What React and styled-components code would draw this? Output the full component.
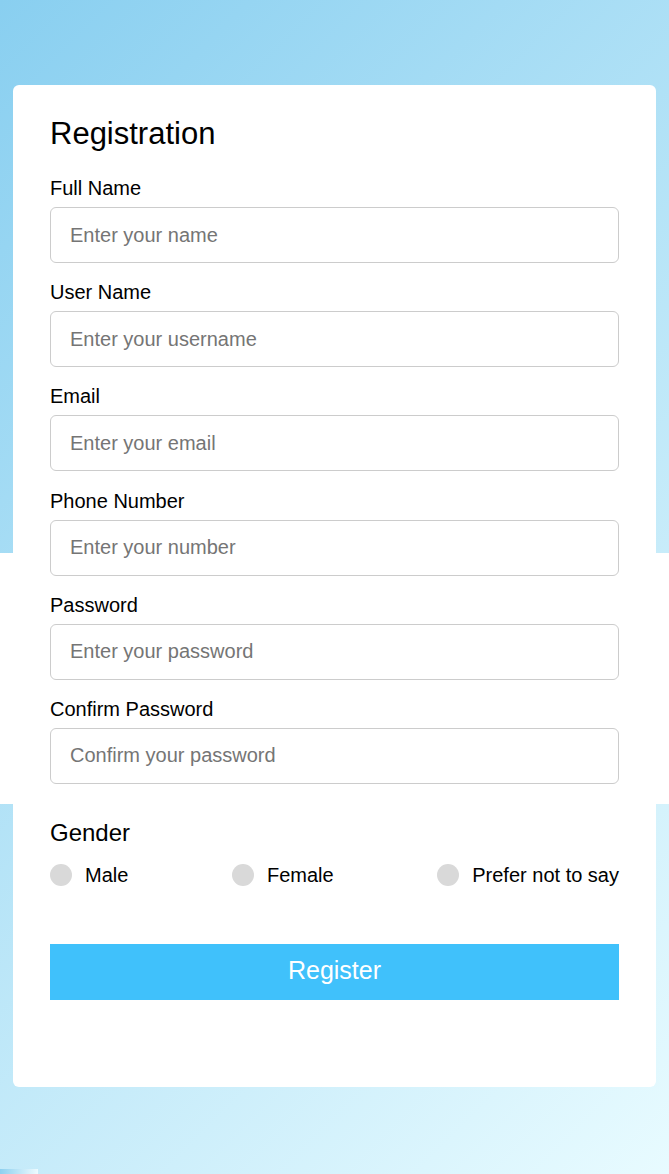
import styled, { createGlobalStyle } from "styled-components";

const fields = [
  { label: "Full Name", placeholder: "Enter your name", type: "text" },
  { label: "User Name", placeholder: "Enter your username", type: "text" },
  { label: "Email", placeholder: "Enter your email", type: "email" },
  { label: "Phone Number", placeholder: "Enter your number", type: "tel" },
  { label: "Password", placeholder: "Enter your password", type: "password" },
  { label: "Confirm Password", placeholder: "Confirm your password", type: "password" },
];

const genders = ["Male", "Female", "Prefer not to say"];

const App = () => {
  return (
    <Page>
      <GlobalStyle />
      <Card>
        <Title>Registration</Title>
        <Fields>
          {fields.map((f) => (
            <Field key={f.label}>
              <Label>{f.label}</Label>
              <Input type={f.type} placeholder={f.placeholder} />
            </Field>
          ))}
        </Fields>
        <GenderTitle>Gender</GenderTitle>
        <GenderRow>
          {genders.map((g) => (
            <Option key={g}>
              <Radio type="radio" name="gender" />
              <span>{g}</span>
            </Option>
          ))}
        </GenderRow>
        <Button type="button">Register</Button>
      </Card>
    </Page>
  );
};

export default App;

const GlobalStyle = createGlobalStyle`
  * {
    box-sizing: border-box;
  }
  body {
    margin: 0;
    font-family: "Liberation Sans", Arial, sans-serif;
  }
`;

// the white band and the little strip at the bottom are part of the page background
const Page = styled.div`
  min-height: 1174px;
  padding: 85px 13px 87px;
  background:
    linear-gradient(to right, #8dd0ef, #eefbff) 0 1169px / 38px 5px no-repeat,
    linear-gradient(#fff, #fff) 0 553px / 100% 251px no-repeat,
    linear-gradient(135deg, #89cff0, #e8fbff) 0 0 / 100% 100% no-repeat;
`;

const Card = styled.div`
  background: #fff;
  border-radius: 6px;
  padding: 31px 37px 87px;
  color: #000;
`;

const Title = styled.h1`
  margin: 0;
  font-size: 31px;
  font-weight: 400;
  line-height: 35px;
`;

const Fields = styled.div`
  margin-top: 26px;
  display: flex;
  flex-direction: column;
  gap: 18.2px;
`;

const Field = styled.div`
  display: flex;
  flex-direction: column;
  gap: 7px;
`;

const Label = styled.label`
  font-size: 20px;
  line-height: 23px;
`;

const Input = styled.input`
  height: 56px;
  width: 100%;
  border: 1px solid #cccccc;
  border-radius: 6px;
  padding: 0 19px;
  font-family: inherit;
  font-size: 20px;
  color: #000;
  outline: none;
  &::placeholder {
    color: #757575;
  }
`;

const GenderTitle = styled.h2`
  margin: 35px 0 0;
  font-size: 24px;
  font-weight: 400;
  line-height: 28px;
`;

const GenderRow = styled.div`
  margin-top: 17px;
  display: flex;
  justify-content: space-between;
  align-items: center;
`;

const Option = styled.label`
  display: flex;
  align-items: center;
  gap: 13px;
  font-size: 20px;
  line-height: 23px;
`;

const Radio = styled.input`
  appearance: none;
  margin: 0;
  width: 22px;
  height: 22px;
  border-radius: 50%;
  background: #d9d9d9;
`;

const Button = styled.button`
  display: block;
  width: 100%;
  height: 56px;
  margin-top: 57px;
  padding: 0 0 3px;
  border: none;
  background: #40c1fb;
  color: #fff;
  font-family: inherit;
  font-size: 25px;
`;
